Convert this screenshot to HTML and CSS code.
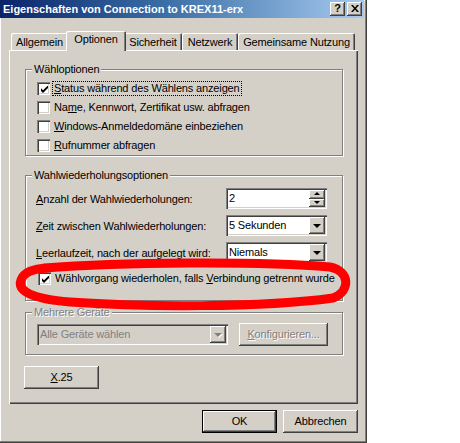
FILE: index.html
```html
<!DOCTYPE html>
<html lang="de">
<head>
<meta charset="utf-8">
<title>Eigenschaften von Connection to KREX11-erx</title>
<link rel="stylesheet" href="styles.css">
</head>
<body>
<div class="dialog">
  <div class="titlebar">
    <span class="title">Eigenschaften von Connection to KREX11-erx</span>
    <div class="tb-buttons">
      <span class="tb-btn help">?</span>
      <span class="tb-btn close"><svg width="8" height="7" viewBox="0 0 8 7"><path d="M0 0h2l2 2.5 2-2.5h2l-3 3.5 3 3.5h-2l-2-2.5-2 2.5h-2l3-3.5z" fill="#000"/></svg></span>
    </div>
  </div>

  <div class="tabs">
    <div class="tab w-allg">Allgemein</div>
    <div class="tab active w-opt">Optionen</div>
    <div class="tab w-sich">Sicherheit</div>
    <div class="tab w-netz">Netzwerk</div>
    <div class="tab w-gem">Gemeinsame Nutzung</div>
  </div>

  <div class="panel">
    <div class="group g1">
      <span class="group-label">Wähloptionen</span>
      <div class="check-row"><span class="cb"><svg class="tick" width="7" height="7" viewBox="0 0 7 7"><path d="M0 2.2L2 4.2L7 -0.6V2L2 7L0 5Z" fill="#000"/></svg></span><span class="cb-text focus"><u>S</u>tatus während des Wählens anzeigen</span></div>
      <div class="check-row"><span class="cb"></span><span class="cb-text">Na<u>m</u>e, Kennwort, Zertifikat usw. abfragen</span></div>
      <div class="check-row"><span class="cb"></span><span class="cb-text"><u>W</u>indows-Anmeldedomäne einbeziehen</span></div>
      <div class="check-row"><span class="cb"></span><span class="cb-text"><u>R</u>ufnummer abfragen</span></div>
    </div>

    <div class="group g2">
      <span class="group-label">Wahlwiederholungsoptionen</span>
      <div class="field-row">
        <span class="field-label"><u>A</u>nzahl der Wahlwiederholungen:</span>
        <div class="field spin">
          <span class="field-value">2</span>
          <div class="spin-btns">
            <span class="spin-btn"><i class="tri-up"></i></span>
            <span class="spin-btn"><i class="tri-down"></i></span>
          </div>
        </div>
      </div>
      <div class="field-row">
        <span class="field-label"><u>Z</u>eit zwischen Wahlwiederholungen:</span>
        <div class="field combo">
          <span class="field-value">5 Sekunden</span>
          <span class="drop-btn"><i class="arrow"></i></span>
        </div>
      </div>
      <div class="field-row">
        <span class="field-label"><u>L</u>eerlaufzeit, nach der aufgelegt wird:</span>
        <div class="field combo">
          <span class="field-value">Niemals</span>
          <span class="drop-btn"><i class="arrow"></i></span>
        </div>
      </div>
      <div class="check-row redial"><span class="cb"><svg class="tick" width="7" height="7" viewBox="0 0 7 7"><path d="M0 2.2L2 4.2L7 -0.6V2L2 7L0 5Z" fill="#000"/></svg></span><span class="cb-text">Wählvorgang wiederholen, falls <u>V</u>erbindung getrennt wurde</span></div>
    </div>

    <div class="group g3">
      <span class="group-label disabled">Mehrere Geräte</span>
      <div class="dev-row">
        <div class="field combo dev-combo">
          <span class="field-value disabled-plain">Alle Geräte wählen</span>
          <span class="drop-btn"><i class="arrow grey"></i></span>
        </div>
        <span class="btn config disabled"><u>K</u>onfigurieren...</span>
      </div>
    </div>

    <span class="btn x25"><u>X</u>.25</span>
  </div>

  <div class="footer">
    <span class="btn default">OK</span>
    <span class="btn">Abbrechen</span>
  </div>

  <svg class="scribble" width="367" height="443" viewBox="0 0 367 443">
    <path d="M44 268 C120 262 260 261 330 267 C350 271 351 291 333 298 C262 308 140 307 70 302 C32 299 17 291 21 280 C24 272 32 269 48 268" fill="none" stroke="#ff0000" stroke-width="9" stroke-linecap="round" stroke-linejoin="round"/>
  </svg>
</div>
</body>
</html>
```

FILE: styles.css
```css
* { box-sizing: border-box; }

body {
  margin: 0;
  background: #ffffff;
  font-family: "Liberation Sans", Arial, sans-serif;
  font-size: 11px;
  letter-spacing: -0.15px;
  color: #000;
}

u { text-decoration: underline; text-underline-offset: 1px; }

.dialog {
  position: relative;
  width: 367px;
  height: 443px;
  background: #d4d0c8;
  display: flex;
  flex-direction: column;
  box-shadow: inset -1px -1px 0 #404040, inset -2px -2px 0 #808080, inset 1px 1px 0 #ffffff;
}

/* Title bar */
.titlebar {
  height: 18px;
  margin-right: 3px;
  display: flex;
  align-items: center;
  justify-content: space-between;
  padding: 0 2px 0 3px;
  background: linear-gradient(to right, #0a246a 0%, #3a6ea5 45%, #a6caf0 100%);
}
.title {
  color: #fff;
  font-weight: bold;
  font-size: 11px;
  letter-spacing: 0;
}
.tb-buttons { display: flex; gap: 2px; }
.tb-btn {
  width: 15px;
  height: 14px;
  background: #d4d0c8;
  box-shadow: inset -1px -1px 0 #404040, inset 1px 1px 0 #ffffff, inset -2px -2px 0 #808080;
  display: flex;
  align-items: center;
  justify-content: center;
  font-weight: bold;
  font-size: 11px;
  line-height: 1;
  padding-bottom: 1px;
}

/* Tabs */
.tabs {
  display: flex;
  align-items: flex-end;
  height: 19px;
  margin: 13px 0 0 11px;
}
.tab {
  height: 17px;
  padding-top: 3px;
  text-align: center;
  background: #d4d0c8;
  border-radius: 2px 2px 0 0;
  box-shadow: inset 1px 1px 0 #ffffff, inset -1px 0 0 #404040, inset -2px 0 0 #808080;
  line-height: 12px;
}
.tab.active {
  position: relative;
  z-index: 1;
  height: 20px;
  margin: 0 -2px -1px -2px;
  padding-top: 2px;
}
.w-allg { width: 57px; }
.w-opt { width: 60px; }
.w-sich { width: 58px; }
.w-netz { width: 56px; }
.w-gem { width: 117px; }

/* Panel */
.panel {
  width: 349px;
  height: 354px;
  margin-left: 9px;
  padding: 19px 0 0 16px;
  display: flex;
  flex-direction: column;
  align-items: flex-start;
  box-shadow: inset 1px 1px 0 #ffffff, inset -1px -1px 0 #404040, inset -2px -2px 0 #808080;
}

.group {
  position: relative;
  width: 318px;
  border: 1px solid #808080;
  box-shadow: inset 1px 1px 0 #ffffff, 1px 1px 0 #ffffff;
}
.group-label {
  position: absolute;
  top: -7px;
  left: 6px;
  padding: 0 2px;
  line-height: 13px;
  background: #d4d0c8;
}
.disabled {
  color: #808080;
  text-shadow: 1px 1px 0 #ffffff;
}

.g1 { height: 87px; padding: 9px 0 0 11px; }
.g2 { height: 126px; margin-top: 19px; padding: 12px 15px 0 10px; }
.g3 { height: 43px; margin-top: 11px; padding: 10px 0 0 11px; }

.check-row {
  height: 19px;
  display: flex;
  align-items: center;
  white-space: nowrap;
}
.cb {
  width: 13px;
  height: 13px;
  flex: none;
  display: flex;
  align-items: center;
  justify-content: center;
  background: #fff;
  box-shadow: inset 1px 1px 0 #808080, inset 2px 2px 0 #404040, inset -1px -1px 0 #ffffff, inset -2px -2px 0 #d4d0c8;
  margin-right: 3px;
}
.tick { display: block; margin: 1px 0 0 1px; }
.cb-text { padding: 0 1px; line-height: 13px; }
.cb-text.focus { outline: 1px dotted #000; outline-offset: 0; }

.field-row {
  height: 21px;
  margin-bottom: 6px;
  display: flex;
  align-items: center;
  justify-content: space-between;
  white-space: nowrap;
}
.field-label { line-height: 13px; padding-top: 2px; }
.field {
  width: 101px;
  height: 21px;
  background: #fff;
  display: flex;
  align-items: center;
  padding: 2px;
  box-shadow: inset 1px 1px 0 #808080, inset 2px 2px 0 #404040, inset -1px -1px 0 #ffffff, inset -2px -2px 0 #d4d0c8;
}
.field-value { flex: 1; padding-left: 1px; line-height: 13px; font-size: 11px; }
.spin-btns {
  width: 16px;
  height: 17px;
  display: flex;
  flex-direction: column;
}
.spin-btn {
  flex: 1;
  display: flex;
  align-items: center;
  justify-content: center;
  background: #d4d0c8;
  box-shadow: inset -1px -1px 0 #404040, inset 1px 1px 0 #ffffff, inset -2px -2px 0 #808080;
}
.tri-up, .tri-down { width: 0; height: 0; border-left: 3px solid transparent; border-right: 3px solid transparent; }
.tri-up { border-bottom: 3px solid #000; margin-top: -1px; }
.tri-down { border-top: 3px solid #000; margin-top: -1px; }

.drop-btn {
  width: 16px;
  height: 17px;
  display: flex;
  align-items: center;
  justify-content: center;
  background: #d4d0c8;
  box-shadow: inset -1px -1px 0 #404040, inset 1px 1px 0 #ffffff, inset -2px -2px 0 #808080;
}
.arrow {
  width: 0;
  height: 0;
  border-left: 4px solid transparent;
  border-right: 4px solid transparent;
  border-top: 4px solid #000;
  margin-top: 1px;
}
.arrow.grey { border-top-color: #808080; filter: drop-shadow(1px 1px 0 #fff); }

.redial { margin-top: 3px; padding-left: 2px; }

.dev-row { display: flex; align-items: center; gap: 11px; height: 23px; }
.dev-combo { width: 191px; background: #d4d0c8; }
.disabled-plain { color: #808080; }

.btn {
  display: flex;
  align-items: center;
  justify-content: center;
  width: 75px;
  height: 23px;
  background: #d4d0c8;
  box-shadow: inset -1px -1px 0 #404040, inset 1px 1px 0 #ffffff, inset -2px -2px 0 #808080;
  line-height: 13px;
}
.btn.config { width: 89px; }
.btn.x25 { margin: 11px 0 0 -1px; }
.btn.default {
  border: 1px solid #000;
  box-shadow: inset -1px -1px 0 #404040, inset 1px 1px 0 #ffffff, inset -2px -2px 0 #808080;
}

.footer {
  display: flex;
  justify-content: flex-end;
  gap: 6px;
  margin: 6px 9px 0 0;
}

.scribble {
  position: absolute;
  left: 0;
  top: 0;
  pointer-events: none;
}
```
